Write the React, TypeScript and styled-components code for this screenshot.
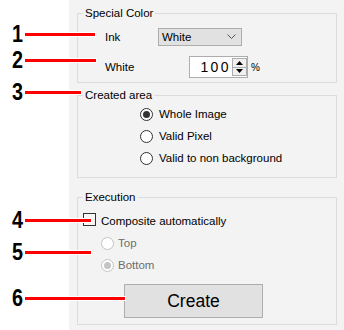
import React from "react";
import styled, { createGlobalStyle } from "styled-components";

const Global = createGlobalStyle`
  html, body { margin: 0; padding: 0; background: #ffffff; }
  body { font-family: "Liberation Sans", Arial, sans-serif; }
  * { box-sizing: border-box; }
`;

const Root = styled.div`
  position: relative;
  width: 344px;
  height: 330px;
  display: flex;
  overflow: hidden;
`;

const Gutter = styled.div`
  width: 69px;
  flex: none;
  background: #ffffff;
`;

const Panel = styled.div`
  flex: 1;
  background: #f3f3f3;
  padding: 6px 7px 0 8px;
  display: flex;
  flex-direction: column;
  font-size: 11.5px;
  color: #000;
`;

const Group = styled.fieldset<{ $mt?: number; $pt: number; $pb: number }>`
  margin: ${(p) => p.$mt ?? 0}px 0 0 0;
  padding: ${(p) => p.$pt}px 0 ${(p) => p.$pb}px 0;
  border: 1px solid #dcdcdc;
  min-width: 0;
  display: flex;
  flex-direction: column;
`;

const Legend = styled.legend`
  margin-left: 5px;
  padding: 0 2px;
  font-size: 11.5px;
  line-height: 14px;
  height: 14px;
  color: #000;
`;

const Row = styled.div<{ $h: number; $pl: number; $mt?: number }>`
  display: flex;
  align-items: center;
  height: ${(p) => p.$h}px;
  padding-left: ${(p) => p.$pl}px;
  margin-top: ${(p) => p.$mt ?? 0}px;
`;

const FieldLabel = styled.span`
  width: 53px;
  flex: none;
`;

const Combo = styled.div`
  width: 84px;
  height: 18px;
  background: #e1e1e1;
  border: 1px solid #adadad;
  display: flex;
  align-items: center;
  justify-content: space-between;
  padding: 0 5px 0 3px;
`;

const Spinner = styled.div`
  margin-left: 31px;
  width: 59px;
  height: 22px;
  background: #ffffff;
  border: 1px solid #adadad;
  display: flex;
  align-items: stretch;
`;

const SpinValue = styled.span`
  flex: 1;
  text-align: right;
  font-size: 14px;
  letter-spacing: 2.4px;
  line-height: 20px;
`;

const SpinButtons = styled.div`
  width: 15px;
  margin: 1px 0 1px 1px;
  border: 1px solid #adadad;
  background: #f0f0f0;
  display: flex;
  flex-direction: column;
`;

const SpinHalf = styled.div<{ $top?: boolean }>`
  flex: 1;
  display: flex;
  align-items: center;
  justify-content: center;
  border-bottom: ${(p) => (p.$top ? "1px solid #adadad" : "none")};
`;

const Unit = styled.span`
  margin-left: 3px;
  font-size: 10px;
`;

const RadioCircle = styled.span<{ $checked?: boolean; $disabled?: boolean }>`
  width: 13px;
  height: 13px;
  flex: none;
  border-radius: 50%;
  border: 1px solid ${(p) => (p.$disabled ? "#c4c4c4" : "#333333")};
  background: #ffffff;
  display: flex;
  align-items: center;
  justify-content: center;
  &::after {
    content: "";
    display: ${(p) => (p.$checked ? "block" : "none")};
    width: 7px;
    height: 7px;
    border-radius: 50%;
    background: ${(p) => (p.$disabled ? "#c4c4c4" : "#333333")};
  }
`;

const OptionText = styled.span<{ $gap: number; $disabled?: boolean }>`
  margin-left: ${(p) => p.$gap}px;
  color: ${(p) => (p.$disabled ? "#6d6d6d" : "#000000")};
`;

const CheckBox = styled.span`
  width: 13px;
  height: 13px;
  flex: none;
  border: 1px solid #333333;
  background: #f7f7f7;
  margin-top: -3px;
`;

const CreateButton = styled.button`
  margin: 8px 0 0 46px;
  width: 139px;
  height: 34px;
  background: #e1e1e1;
  border: 1px solid #adadad;
  font-family: "Liberation Sans", Arial, sans-serif;
  font-size: 17.5px;
  color: #000;
  padding: 0;
`;

const Callout = styled.div<{ $top: number }>`
  position: absolute;
  left: 12px;
  top: ${(p) => p.$top}px;
  height: 24px;
  display: flex;
  align-items: center;
`;

const CalloutNum = styled.span`
  width: 13px;
  font-size: 23px;
  font-weight: bold;
  line-height: 24px;
  color: #000;
  transform: scaleX(0.86);
  transform-origin: left center;
`;

const CalloutLine = styled.span<{ $w: number }>`
  width: ${(p) => p.$w}px;
  height: 3px;
  background: #ff0000;
  box-shadow: 0 0 0 1px #ffffff;
`;

const Chevron = () => (
  <svg width="9" height="6" viewBox="0 0 9 6">
    <polyline points="0.5,0.5 4.5,4.5 8.5,0.5" fill="none" stroke="#555" strokeWidth="1" />
  </svg>
);

const UpArrow = () => (
  <svg width="7" height="4" viewBox="0 0 7 4">
    <polygon points="3.5,0 7,4 0,4" fill="#000" />
  </svg>
);

const DownArrow = () => (
  <svg width="7" height="4" viewBox="0 0 7 4">
    <polygon points="0,0 7,0 3.5,4" fill="#000" />
  </svg>
);

const callouts = [
  { n: "1", top: 22, w: 70 },
  { n: "2", top: 48, w: 71 },
  { n: "3", top: 80, w: 56 },
  { n: "4", top: 208, w: 66 },
  { n: "5", top: 240, w: 66 },
  { n: "6", top: 286, w: 100 },
];

export default function App() {
  return (
    <Root>
      <Global />
      <Gutter />
      <Panel>
        <Group $pt={8} $pb={4}>
          <Legend>Special Color</Legend>
          <Row $h={18} $pl={27}>
            <FieldLabel>Ink</FieldLabel>
            <Combo>
              <span>White</span>
              <Chevron />
            </Combo>
          </Row>
          <Row $h={22} $pl={27} $mt={10}>
            <FieldLabel>White</FieldLabel>
            <Spinner>
              <SpinValue>100</SpinValue>
              <SpinButtons>
                <SpinHalf $top>
                  <UpArrow />
                </SpinHalf>
                <SpinHalf>
                  <DownArrow />
                </SpinHalf>
              </SpinButtons>
            </Spinner>
            <Unit>%</Unit>
          </Row>
        </Group>

        <Group $mt={5} $pt={1} $pb={8}>
          <Legend>Created area</Legend>
          <Row $h={22} $pl={62}>
            <RadioCircle $checked />
            <OptionText $gap={6}>Whole Image</OptionText>
          </Row>
          <Row $h={22} $pl={62}>
            <RadioCircle />
            <OptionText $gap={6}>Valid Pixel</OptionText>
          </Row>
          <Row $h={22} $pl={62}>
            <RadioCircle />
            <OptionText $gap={6}>Valid to non background</OptionText>
          </Row>
        </Group>

        <Group $mt={12} $pt={6} $pb={6}>
          <Legend>Execution</Legend>
          <Row $h={22} $pl={5}>
            <CheckBox />
            <OptionText $gap={5}>Composite automatically</OptionText>
          </Row>
          <Row $h={22} $pl={23}>
            <RadioCircle $disabled />
            <OptionText $gap={4} $disabled>
              Top
            </OptionText>
          </Row>
          <Row $h={22} $pl={23}>
            <RadioCircle $disabled $checked />
            <OptionText $gap={4} $disabled>
              Bottom
            </OptionText>
          </Row>
          <CreateButton>Create</CreateButton>
        </Group>
      </Panel>
      {callouts.map((c) => (
        <Callout key={c.n} $top={c.top}>
          <CalloutNum>{c.n}</CalloutNum>
          <CalloutLine $w={c.w} />
        </Callout>
      ))}
    </Root>
  );
}
